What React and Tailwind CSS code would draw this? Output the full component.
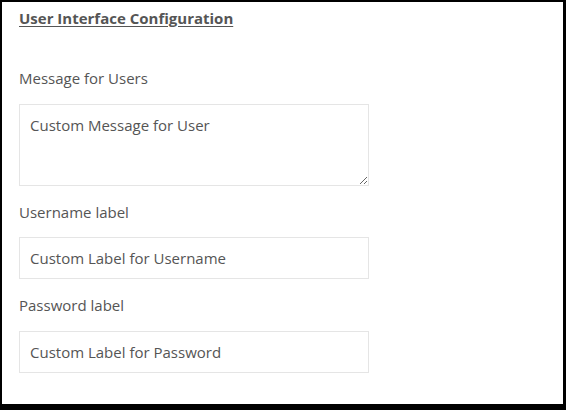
export default function App() {
  return (
    <div className="w-[566px] h-[410px] bg-black pt-[2px] pl-[2px] pr-[3px] pb-[6px] font-['Open_Sans',sans-serif]">
      <div className="h-full bg-white px-[17px] pt-[6px]">
        <h2 className="text-[15px] leading-[20px] font-bold text-[#555] underline underline-offset-2">
          User Interface Configuration
        </h2>
        <form className="mt-[40px] w-[350px] text-[15px] leading-[20px] text-[#555]">
          <label className="block">Message for Users</label>
          <textarea
            placeholder="Custom Message for User"
            className="mt-[16px] block w-full h-[82px] border border-[#e5e5e5] px-[10px] py-[10px] outline-none placeholder:text-[#555]"
          />
          <label className="block mt-[16px]">Username label</label>
          <input
            type="text"
            placeholder="Custom Label for Username"
            className="mt-[15px] block w-full h-[42px] border border-[#e5e5e5] px-[10px] outline-none placeholder:text-[#555]"
          />
          <label className="block mt-[16px]">Password label</label>
          <input
            type="text"
            placeholder="Custom Label for Password"
            className="mt-[16px] block w-full h-[42px] border border-[#e5e5e5] px-[10px] outline-none placeholder:text-[#555]"
          />
        </form>
      </div>
    </div>
  )
}
